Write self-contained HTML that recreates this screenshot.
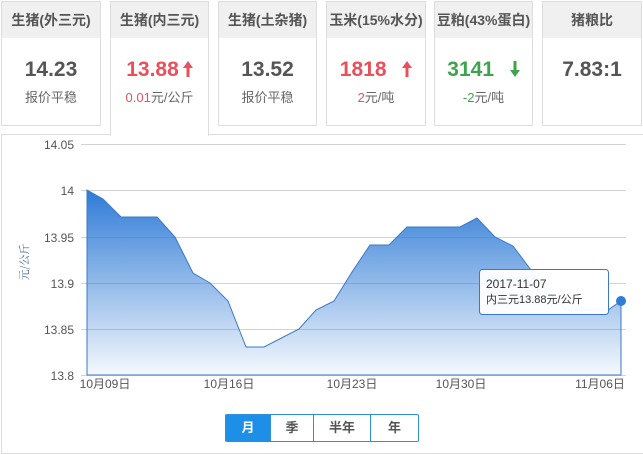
<!DOCTYPE html>
<html><head><meta charset="utf-8"><style>
*{margin:0;padding:0;box-sizing:border-box}
body{width:643px;height:449px;background:#fff;font-family:"Liberation Sans","Microsoft YaHei","Noto Sans CJK SC",sans-serif;position:relative;overflow:hidden}
.card{position:absolute;top:1px;height:125px;border:1px solid #ddd;background:#fff;text-align:center}
.card .h{height:36px;background:#f0f0f0;line-height:36px;font-size:14px;font-weight:bold;color:#555}
.card .v{margin-top:19px;font-size:21px;font-weight:bold;color:#555;line-height:26px}
.card .s{margin-top:4px;font-size:13px;color:#666}
.red{color:#e8505b!important}.green{color:#3fa34d!important}
.panel{position:absolute;left:1px;top:134px;width:643px;height:320px;border:1px solid #ddd}
.btns{position:absolute;left:225px;top:414px;height:28px;display:flex;border:1px solid #2f8fd8;border-radius:2px}
.btns div{height:26px;line-height:26px;text-align:center;font-size:13px;font-weight:bold;color:#555;border-left:1px solid #2f8fd8}
.ar{display:inline-block;vertical-align:-1px;margin-left:4px}
</style></head><body>
<div class="panel"></div>
<div class="card" style="left:1px;width:100px"><div class="h">生猪(外三元)</div><div class="v">14.23</div><div class="s">报价平稳</div></div>
<div class="card" style="left:110px;width:99px;height:135px;border-bottom:none;z-index:2"><div class="h">生猪(内三元)</div><div class="v red">13.88<svg class="ar" width="10" height="16" viewBox="0 0 10 16"><path d="M5,0 L10,7 L6.5,7 L6.5,16 L3.5,16 L3.5,7 L0,7 Z" fill="#e8505b"/></svg></div><div class="s"><span class="red">0.01</span>元/公斤</div></div>
<div class="card" style="left:218px;width:99px"><div class="h">生猪(土杂猪)</div><div class="v">13.52</div><div class="s">报价平稳</div></div>
<div class="card" style="left:326px;width:100px"><div class="h">玉米(15%水分)</div><div class="v red">1818 &nbsp;<svg class="ar" width="10" height="16" viewBox="0 0 10 16"><path d="M5,0 L10,7 L6.5,7 L6.5,16 L3.5,16 L3.5,7 L0,7 Z" fill="#e8505b"/></svg></div><div class="s"><span class="red">2</span>元/吨</div></div>
<div class="card" style="left:434px;width:99px"><div class="h">豆粕(43%蛋白)</div><div class="v green">3141 &nbsp;<svg class="ar" width="10" height="16" viewBox="0 0 10 16"><path d="M5,16 L10,9 L6.5,9 L6.5,0 L3.5,0 L3.5,9 L0,9 Z" fill="#3fa34d"/></svg></div><div class="s"><span class="green">-2</span>元/吨</div></div>
<div class="card" style="left:542px;width:100px"><div class="h">猪粮比</div><div class="v">7.83:1</div></div>
<svg style="position:absolute;left:0;top:0" width="643" height="449">
<defs><linearGradient id="g" x1="0" y1="0" x2="0" y2="1"><stop offset="0" stop-color="#2f7bd6"/><stop offset="1" stop-color="#2f7bd6" stop-opacity="0.05"/></linearGradient></defs>
<g stroke="#d3d3d3" stroke-width="1">
<line x1="81" y1="144.5" x2="626" y2="144.5"/><line x1="81" y1="190.5" x2="626" y2="190.5"/><line x1="81" y1="237.5" x2="626" y2="237.5"/><line x1="81" y1="283.5" x2="626" y2="283.5"/><line x1="81" y1="329.5" x2="626" y2="329.5"/><line x1="81" y1="375.5" x2="626" y2="375.5"/></g>
<path d="M87,190 L103,199 L121,217 L157,217 L175,237 L193,273 L210,283 L228,301 L246,347 L264,347 L299,329 L316,310 L334,301 L352,272 L370,245 L389,245 L407,227 L460,227 L477,218 L495,237 L513,246 L531,270 L549,292 L567,310 L585,310 L608,310 L621,301 L621,375 L87,375 Z" fill="url(#g)" stroke="#3a78c8" stroke-width="1"/>
<circle cx="621" cy="301" r="5" fill="#2f7bd6"/>
<g font-size="12" fill="#555" text-anchor="end" font-family="Liberation Sans,sans-serif">
<text x="74" y="149">14.05</text><text x="74" y="195">14</text><text x="74" y="242">13.95</text><text x="74" y="288">13.9</text><text x="74" y="334">13.85</text><text x="74" y="380">13.8</text></g>
<g font-size="12" fill="#555" text-anchor="middle" font-family="Liberation Sans,'Noto Sans CJK SC',sans-serif">
<text x="105" y="388">10月09日</text><text x="229" y="388">10月16日</text><text x="352" y="388">10月23日</text><text x="461" y="388">10月30日</text><text x="600" y="388">11月06日</text></g>
<text transform="translate(28,262) rotate(-90)" text-anchor="middle" font-size="11" fill="#3a5f8f" font-family="'Noto Serif CJK SC',serif">元/公斤</text>
<rect x="479.5" y="269.5" width="129" height="45" rx="3" fill="#fff" fill-opacity="0.95" stroke="#3a78c8"/>
<text x="486" y="288" font-size="12" fill="#333" font-family="Liberation Sans,sans-serif">2017-11-07</text>
<text x="486" y="303" font-size="11" fill="#333" font-family="Liberation Sans,'Noto Sans CJK SC',sans-serif">内三元13.88元/公斤</text>
</svg>
<div class="btns"><div style="width:44px;background:#1e8fe6;color:#fff;border-left:none">月</div><div style="width:43px">季</div><div style="width:57px">半年</div><div style="width:48px">年</div></div>
</body></html>
